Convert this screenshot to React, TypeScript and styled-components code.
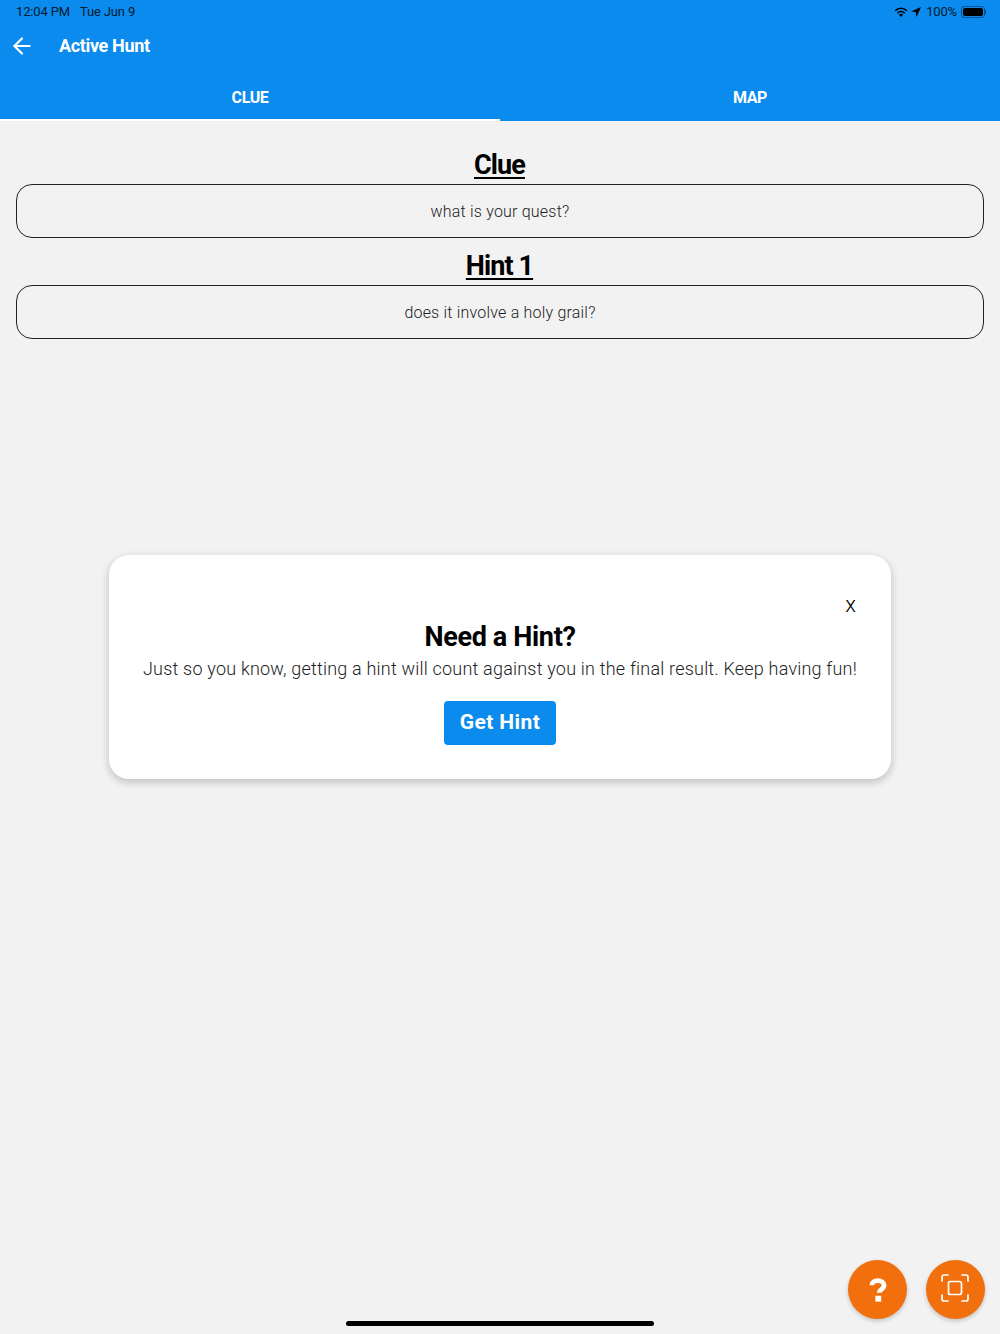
import { createGlobalStyle, styled } from "styled-components";
import { FiArrowLeft } from "react-icons/fi";

const GlobalStyle = createGlobalStyle`
  html, body {
    margin: 0;
    padding: 0;
    background: #f2f2f2;
  }
  * {
    box-sizing: border-box;
  }
`;

const FONT = `Roboto, "Liberation Sans", sans-serif`;

export default function App() {
  return (
    <Page>
      <GlobalStyle />
      <Header>
        <StatusBar>
          <StatusTime>12:04 PM</StatusTime>
          <StatusDate>Tue Jun 9</StatusDate>
          <StatusRight>
            <svg width="14" height="11" viewBox="0 0 14 11">
              <path d="M7 11 4.9 8.7a3 3 0 0 1 4.2 0Z" fill="#000" />
              <path d="M3.4 7.1a5 5 0 0 1 7.2 0" fill="none" stroke="#000" strokeWidth="1.6" />
              <path d="M1.2 4.7a8.2 8.2 0 0 1 11.6 0" fill="none" stroke="#000" strokeWidth="1.6" />
            </svg>
            <svg width="10" height="10" viewBox="0 0 10 10">
              <path d="M10 0 0 4.4l4.7.7.8 4.9Z" fill="#000" />
            </svg>
            <BatteryLabel>100%</BatteryLabel>
            <Battery>
              <BatteryFill />
            </Battery>
            <BatteryCap />
          </StatusRight>
        </StatusBar>
        <AppBar>
          <BackIcon>
            <FiArrowLeft size={26} />
          </BackIcon>
          <AppTitle>Active Hunt</AppTitle>
        </AppBar>
        <Tabs>
          <Tab $active>CLUE</Tab>
          <Tab>MAP</Tab>
        </Tabs>
      </Header>

      <Content>
        <Heading>Clue</Heading>
        <TextBox>what is your quest?</TextBox>
        <Heading>Hint 1</Heading>
        <TextBox>does it involve a holy grail?</TextBox>
      </Content>

      <Overlay>
        <Modal>
          <CloseRow>
            <CloseButton>x</CloseButton>
          </CloseRow>
          <ModalTitle>Need a Hint?</ModalTitle>
          <ModalText>
            Just so you know, getting a hint will count against you in the final result. Keep having fun!
          </ModalText>
          <HintButton>Get Hint</HintButton>
        </Modal>
      </Overlay>

      <Fabs>
        <Fab>
          <svg width="18" height="24" viewBox="0 0 20 27">
            <path
              d="M3 8.2C3 4.8 5.8 3 9.8 3c4 0 7 1.9 7 5.2 0 4.6-5.4 4.4-5.4 8.3"
              fill="none"
              stroke="#fff"
              strokeWidth="5.4"
            />
            <rect x="7" y="20" width="6.6" height="6.6" fill="#fff" />
          </svg>
        </Fab>
        <Fab>
          <ScanIcon width="28" height="28" viewBox="0 0 28 28" fill="none" stroke="#fff" strokeWidth="1.7" strokeLinecap="round">
            <path d="M1 7V3a2 2 0 0 1 2-2h4" />
            <path d="M21 1h4a2 2 0 0 1 2 2v4" />
            <path d="M27 21v4a2 2 0 0 1-2 2h-4" />
            <path d="M7 27H3a2 2 0 0 1-2-2v-4" />
            <rect x="7.5" y="7.5" width="13" height="13" rx="2" />
          </ScanIcon>
        </Fab>
      </Fabs>
      <HomeIndicator />
    </Page>
  );
}

const Page = styled.div`
  position: relative;
  width: 1000px;
  height: 1334px;
  overflow: hidden;
  background: #f2f2f2;
  font-family: ${FONT};
`;

const Header = styled.header`
  display: flex;
  flex-direction: column;
  height: 121px;
  background: #0c8bef;
  color: #fff;
`;

const StatusBar = styled.div`
  display: flex;
  align-items: center;
  height: 23px;
  padding: 0 14px 0 16px;
  color: #021a2e;
  font-size: 13px;
  letter-spacing: -0.15px;
`;

const StatusTime = styled.span`
  margin-right: 10px;
`;

const StatusDate = styled.span``;

const StatusRight = styled.div`
  display: flex;
  align-items: center;
  margin-left: auto;
  gap: 3px;
`;

const BatteryLabel = styled.span`
  margin-left: 2px;
  margin-right: 1px;
`;

const Battery = styled.div`
  width: 24px;
  height: 12px;
  padding: 1px;
  border: 1px solid rgba(0, 0, 0, 0.4);
  border-radius: 3px;
`;

const BatteryFill = styled.div`
  height: 100%;
  border-radius: 2px;
  background: #000;
`;

const BatteryCap = styled.div`
  width: 1px;
  height: 4px;
  margin-left: -3px;
  background: rgba(0, 0, 0, 0.5);
`;

const AppBar = styled.div`
  display: flex;
  align-items: center;
  height: 45px;
  padding-left: 9px;
`;

const BackIcon = styled.div`
  display: flex;
  width: 50px;
`;

const AppTitle = styled.div`
  font-size: 18px;
  font-weight: 700;
  letter-spacing: -0.35px;
`;

const Tabs = styled.div`
  display: flex;
  flex: 1;
  padding-top: 7px;
`;

const Tab = styled.div<{ $active?: boolean }>`
  display: flex;
  flex: 1;
  align-items: center;
  justify-content: center;
  padding-top: 1px;
  border-bottom: 2px solid ${(props) => (props.$active ? "#fff" : "transparent")};
  font-size: 16px;
  font-weight: 700;
  letter-spacing: -0.4px;
`;

const Content = styled.main`
  display: flex;
  flex-direction: column;
  padding: 26px 16px 0;
`;

const Heading = styled.h2`
  margin: 0 0 1px;
  height: 36px;
  padding-right: 1px;
  line-height: 36px;
  color: #000;
  font-size: 27px;
  font-weight: 700;
  letter-spacing: -0.9px;
  text-align: center;
  text-decoration: underline;
  text-underline-offset: 3px;
`;

const TextBox = styled.div`
  display: flex;
  align-items: center;
  justify-content: center;
  height: 54px;
  margin-bottom: 10px;
  border: 1px solid #222;
  border-radius: 16px;
  color: #222;
  font-size: 16px;
  font-weight: 300;
  letter-spacing: 0.2px;
`;

const Overlay = styled.div`
  position: absolute;
  inset: 0;
  display: flex;
  align-items: center;
  justify-content: center;
`;

const Modal = styled.section`
  display: flex;
  flex-direction: column;
  align-items: center;
  width: 782px;
  height: 224px;
  padding: 38px 34px 0;
  border-radius: 20px;
  background: #fff;
  box-shadow: 0 3px 8px rgba(0, 0, 0, 0.22);
`;

const CloseRow = styled.div`
  display: flex;
  justify-content: flex-end;
  align-self: stretch;
  height: 26px;
`;

const CloseButton = styled.span`
  margin-top: -1px;
  padding-right: 1px;
  color: #000;
  font-size: 22px;
  font-weight: 300;
  line-height: 26px;
`;

const ModalTitle = styled.h3`
  margin: 0;
  height: 35px;
  padding-top: 1px;
  color: #000;
  font-size: 27px;
  font-weight: 700;
  line-height: 34px;
  letter-spacing: -0.35px;
`;

const ModalText = styled.p`
  margin: 0;
  height: 29px;
  color: #222;
  font-size: 18px;
  font-weight: 300;
  line-height: 29px;
  letter-spacing: 0.2px;
  white-space: nowrap;
`;

const HintButton = styled.button`
  width: 112px;
  height: 44px;
  margin-top: 18px;
  padding: 0 0 2px;
  border: none;
  border-radius: 4px;
  background: #0c8bef;
  color: #fff;
  font-family: ${FONT};
  font-size: 21px;
  font-weight: 700;
  letter-spacing: 0.4px;
`;

const Fabs = styled.div`
  position: absolute;
  right: 15px;
  bottom: 15px;
  display: flex;
  gap: 19px;
`;

const Fab = styled.div`
  display: flex;
  align-items: center;
  justify-content: center;
  width: 59px;
  height: 59px;
  border-radius: 50%;
  background: #f1700d;
  box-shadow: 0 2px 4px rgba(0, 0, 0, 0.2);
`;

const ScanIcon = styled.svg`
  margin: 0 1px 3px 0;
`;

const HomeIndicator = styled.div`
  position: absolute;
  left: 346px;
  bottom: 8px;
  width: 308px;
  height: 5px;
  border-radius: 3px;
  background: #000;
`;
